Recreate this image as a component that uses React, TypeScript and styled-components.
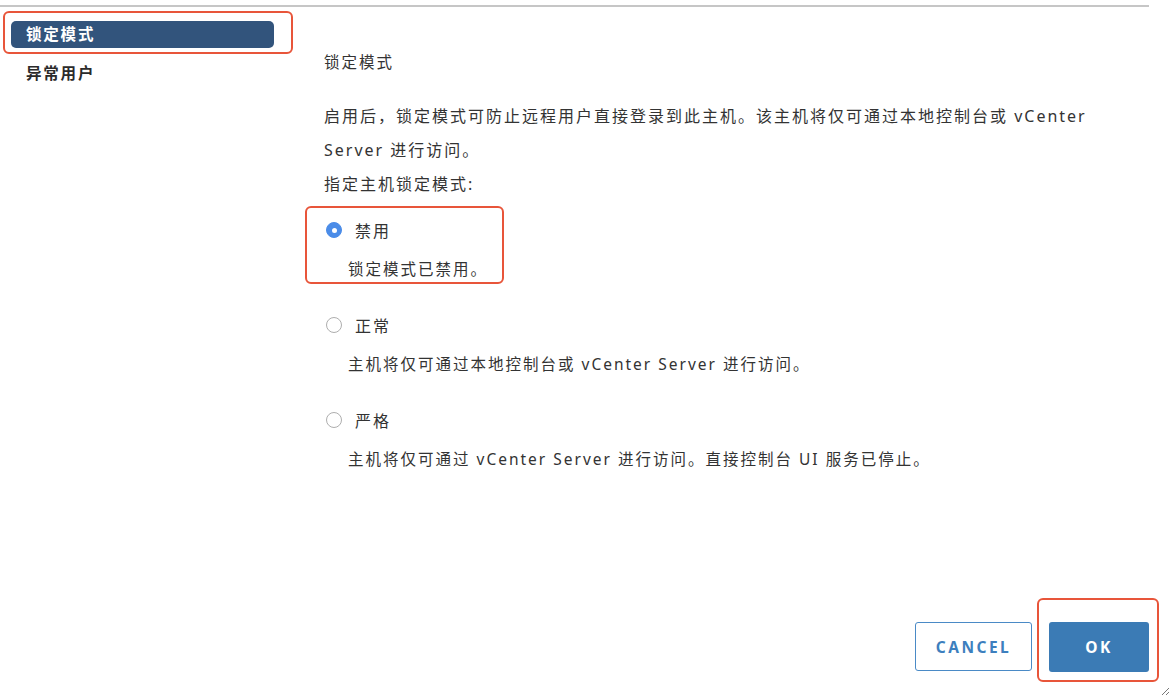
import React, { useState } from 'react';
import styled, { createGlobalStyle } from 'styled-components';

const GlobalStyle = createGlobalStyle`
  html, body {
    margin: 0;
    padding: 0;
    background: #ffffff;
  }
  body {
    font-family: "Noto Sans", "Noto Sans CJK SC", sans-serif;
    font-size: 16px;
    letter-spacing: 2px;
    color: #333333;
  }
  * {
    box-sizing: border-box;
  }
`;

const Page = styled.div`
  position: relative;
  display: flex;
  flex-direction: column;
  height: 100vh;
  padding-top: 5px;
`;

const TopRule = styled.div`
  width: 1149px;
  height: 2px;
  background: #c6c6c6;
`;

const Body = styled.div`
  display: flex;
  flex: 1;
`;

const Sidebar = styled.nav`
  width: 300px;
  padding: 4px 0 0 3px;
  display: flex;
  flex-direction: column;
`;

const Highlight = styled.div`
  border: 2px solid #e8553a;
  border-radius: 6px;
`;

const SideBox = styled(Highlight)`
  width: 290px;
  padding: 8px 17px 4px 6px;
`;

const NavItem = styled.div<{ $active?: boolean }>`
  height: 27px;
  line-height: 27px;
  padding-left: 15px;
  border-radius: 5px;
  font-weight: 700;
  font-size: 15.5px;
  letter-spacing: 1.8px;
  color: ${(p) => (p.$active ? '#ffffff' : '#2b2b2b')};
  background: ${(p) => (p.$active ? '#32547c' : 'transparent')};
  cursor: pointer;
`;

const PlainNav = styled(NavItem)`
  margin-top: 6px;
  padding-left: 23px;
`;

const Content = styled.main`
  flex: 1;
  padding: 43px 0 0 24px;
`;

const Title = styled.div`
  line-height: 24px;
  font-size: 15.5px;
`;

const Para = styled.p`
  margin: 25px 0 0;
  max-width: 800px;
  line-height: 34px;
`;

const Line = styled.div`
  line-height: 34px;
`;

const Options = styled.div`
  display: flex;
  flex-direction: column;
  gap: 17px;
  margin-top: 5px;
`;

const Option = styled.div<{ $marked?: boolean }>`
  width: fit-content;
  margin-left: -19px;
  padding: 10px 14px 1px 19px;
  border: 2px solid ${(p) => (p.$marked ? '#e8553a' : 'transparent')};
  border-radius: 6px;
`;

const OptionRow = styled.label`
  display: flex;
  align-items: center;
  gap: 13px;
  height: 24px;
  cursor: pointer;
`;

const Radio = styled.span<{ $checked?: boolean }>`
  width: 16px;
  height: 16px;
  border-radius: 50%;
  flex-shrink: 0;
  display: flex;
  align-items: center;
  justify-content: center;
  background: ${(p) => (p.$checked ? '#4b8ce8' : '#ffffff')};
  border: 1px solid ${(p) => (p.$checked ? '#4b8ce8' : '#aeaeae')};

  &::after {
    content: '';
    width: 5px;
    height: 5px;
    border-radius: 50%;
    background: #ffffff;
    display: ${(p) => (p.$checked ? 'block' : 'none')};
  }
`;

const OptionDesc = styled.div`
  margin-top: 15px;
  padding-left: 22px;
  line-height: 24px;
  font-size: 15.5px;
`;

const Footer = styled.div`
  display: flex;
  justify-content: flex-end;
  align-items: flex-end;
  gap: 5px;
  padding: 0 13px 16px 0;
`;

const CancelButton = styled.button`
  width: 117px;
  height: 49px;
  margin-bottom: 11px;
  border: 1px solid #4a8ac6;
  border-radius: 3px;
  background: #ffffff;
  color: #3d7fbe;
  font-family: "Noto Sans", sans-serif;
  font-weight: 700;
  font-size: 15.5px;
  letter-spacing: 2.5px;
  cursor: pointer;
`;

const OkBox = styled(Highlight)`
  padding: 22px 8px 8px 10px;
`;

const OkButton = styled.button`
  width: 100px;
  height: 50px;
  border: none;
  border-radius: 3px;
  background: #3b7bb5;
  color: #ffffff;
  font-family: "Noto Sans", sans-serif;
  font-weight: 700;
  font-size: 15.5px;
  letter-spacing: 2.5px;
  cursor: pointer;
`;

const ResizeGrip = styled.svg`
  position: absolute;
  right: 2px;
  bottom: 2px;
`;

const modes = [
  { key: 'disabled', label: '禁用', desc: '锁定模式已禁用。' },
  { key: 'normal', label: '正常', desc: '主机将仅可通过本地控制台或 vCenter Server 进行访问。' },
  { key: 'strict', label: '严格', desc: '主机将仅可通过 vCenter Server 进行访问。直接控制台 UI 服务已停止。' },
];

const App = () => {
  const [tab, setTab] = useState('lockdown');
  const [mode, setMode] = useState('disabled');

  return (
    <>
      <GlobalStyle />
      <Page>
        <TopRule />
        <Body>
          <Sidebar>
            <SideBox>
              <NavItem $active={tab === 'lockdown'} onClick={() => setTab('lockdown')}>
                锁定模式
              </NavItem>
            </SideBox>
            <PlainNav $active={tab === 'users'} onClick={() => setTab('users')}>
              异常用户
            </PlainNav>
          </Sidebar>
          <Content>
            <Title>锁定模式</Title>
            <Para>
              启用后，锁定模式可防止远程用户直接登录到此主机。该主机将仅可通过本地控制台或 vCenter Server 进行访问。
            </Para>
            <Line>指定主机锁定模式:</Line>
            <Options>
              {modes.map((m) => (
                <Option key={m.key} $marked={m.key === 'disabled'}>
                  <OptionRow onClick={() => setMode(m.key)}>
                    <Radio $checked={mode === m.key} />
                    {m.label}
                  </OptionRow>
                  <OptionDesc>{m.desc}</OptionDesc>
                </Option>
              ))}
            </Options>
          </Content>
        </Body>
        <Footer>
          <CancelButton>CANCEL</CancelButton>
          <OkBox>
            <OkButton>OK</OkButton>
          </OkBox>
        </Footer>
        <ResizeGrip width="9" height="9" viewBox="0 0 9 9">
          <path d="M8 1 L1 8 M8 5 L5 8" stroke="#777" strokeWidth="1" />
        </ResizeGrip>
      </Page>
    </>
  );
};

export default App;
